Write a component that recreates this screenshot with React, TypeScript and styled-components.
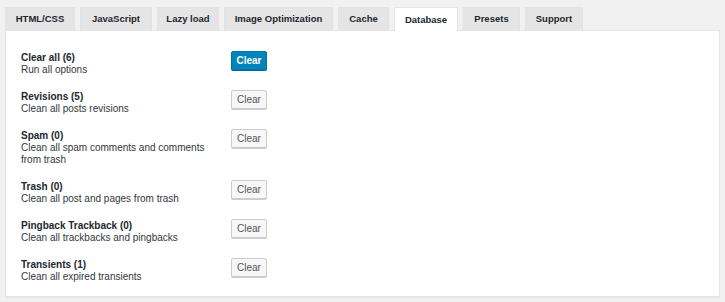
import { FC } from 'react'
import styled, { createGlobalStyle } from 'styled-components'

const GlobalStyle = createGlobalStyle`
  html, body {
    margin: 0;
    padding: 0;
    background: #f1f1f1;
  }
  body {
    font-family: "Liberation Sans", Arial, sans-serif;
    font-size: 10px;
    color: #23282d;
  }
`

interface CleanItem {
  title: string
  desc: string
  primary?: boolean
}

// widths measured off the tab strip
const tabs = [
  { label: 'HTML/CSS', width: 70 },
  { label: 'JavaScript', width: 72 },
  { label: 'Lazy load', width: 62 },
  { label: 'Image Optimization', width: 109 },
  { label: 'Cache', width: 51 },
  { label: 'Database', width: 64 },
  { label: 'Presets', width: 57 },
  { label: 'Support', width: 58 }
]

const items: CleanItem[] = [
  { title: 'Clear all (6)', desc: 'Run all options', primary: true },
  { title: 'Revisions (5)', desc: 'Clean all posts revisions' },
  { title: 'Spam (0)', desc: 'Clean all spam comments and comments from trash' },
  { title: 'Trash (0)', desc: 'Clean all post and pages from trash' },
  { title: 'Pingback Trackback (0)', desc: 'Clean all trackbacks and pingbacks' },
  { title: 'Transients (1)', desc: 'Clean all expired transients' }
]

const App: FC = () => {
  return (
    <Page>
      <GlobalStyle />
      <TabBar>
        {tabs.map((t) => (
          <Tab key={t.label} $width={t.width} $active={t.label === 'Database'}>
            {t.label}
          </Tab>
        ))}
      </TabBar>
      <Panel>
        {items.map((item) => (
          <Row key={item.title}>
            <Info>
              <Title>{item.title}</Title>
              <Desc>{item.desc}</Desc>
            </Info>
            <Button $primary={item.primary}>Clear</Button>
          </Row>
        ))}
      </Panel>
    </Page>
  )
}

const Page = styled.div`
  padding: 7px 5px 5px 5px;
  display: flex;
  flex-direction: column;
`

const TabBar = styled.div`
  display: flex;
  gap: 5px;
  height: 23px;
  position: relative;
  z-index: 1;
`

const Tab = styled.div<{ $active?: boolean; $width: number }>`
  display: flex;
  align-items: center;
  justify-content: center;
  width: ${(p) => p.$width}px;
  height: ${(p) => (p.$active ? '24px' : '23px')};
  box-sizing: border-box;
  background: ${(p) => (p.$active ? '#fff' : '#e5e5e5')};
  border: 1px solid ${(p) => (p.$active ? '#e5e5e5' : '#e2e2e2')};
  border-bottom: ${(p) => (p.$active ? 'none' : '1px solid #e5e5e5')};
  font-weight: bold;
  font-size: 9.5px;
  color: #23282d;
  white-space: nowrap;
`

const Panel = styled.div`
  background: #fff;
  border: 1px solid #e5e5e5;
  box-shadow: 0 1px 1px rgba(0, 0, 0, 0.04);
  padding: 20px 15px 13px 15px;
  display: flex;
  flex-direction: column;
  gap: 14px;
`

const Row = styled.div`
  display: grid;
  grid-template-columns: 210px auto;
  align-items: start;
`

const Info = styled.div`
  display: flex;
  flex-direction: column;
  max-width: 188px;
  line-height: 12px;
  padding-top: 1px;
`

const Title = styled.div`
  font-weight: bold;
`

const Desc = styled.div`
  color: #32373c;
`

const Button = styled.button<{ $primary?: boolean }>`
  justify-self: start;
  height: 19px;
  width: 36px;
  padding: 0;
  border-radius: 2px;
  font-family: "Liberation Sans", Arial, sans-serif;
  font-size: 10px;
  font-weight: ${(p) => (p.$primary ? 'bold' : 'normal')};
  color: ${(p) => (p.$primary ? '#fff' : '#555')};
  background: ${(p) => (p.$primary ? '#0085ba' : '#f7f7f7')};
  border: 1px solid ${(p) => (p.$primary ? '#0073aa' : '#ccc')};
  box-shadow: ${(p) => (p.$primary ? '0 1px 0 #006799' : '0 1px 0 #ccc')};
  cursor: pointer;
`

export default App
